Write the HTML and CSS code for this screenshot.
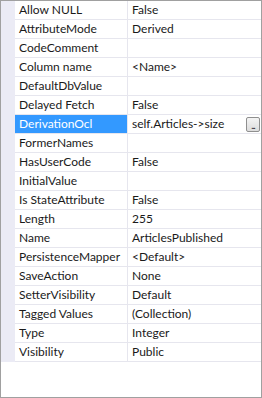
FILE: index.html
```html
<!DOCTYPE html>
<html lang="en">
<head>
    <meta charset="UTF-8">
    <title>Properties</title>
    <link rel="stylesheet" href="styles.css">
</head>
<body>
    <div class="property-grid">
        <div class="prop-row"><div class="gutter"></div><div class="prop-name">Allow NULL</div><div class="prop-value">False</div></div>
        <div class="prop-row"><div class="gutter"></div><div class="prop-name">AttributeMode</div><div class="prop-value">Derived</div></div>
        <div class="prop-row"><div class="gutter"></div><div class="prop-name">CodeComment</div><div class="prop-value"></div></div>
        <div class="prop-row"><div class="gutter"></div><div class="prop-name">Column name</div><div class="prop-value">&lt;Name&gt;</div></div>
        <div class="prop-row"><div class="gutter"></div><div class="prop-name">DefaultDbValue</div><div class="prop-value"></div></div>
        <div class="prop-row"><div class="gutter"></div><div class="prop-name">Delayed Fetch</div><div class="prop-value">False</div></div>
        <div class="prop-row selected"><div class="gutter"></div><div class="prop-name">DerivationOcl</div><div class="prop-value">self.Articles-&gt;size<span class="ellipsis-btn">...</span></div></div>
        <div class="prop-row"><div class="gutter"></div><div class="prop-name">FormerNames</div><div class="prop-value"></div></div>
        <div class="prop-row"><div class="gutter"></div><div class="prop-name">HasUserCode</div><div class="prop-value">False</div></div>
        <div class="prop-row"><div class="gutter"></div><div class="prop-name">InitialValue</div><div class="prop-value"></div></div>
        <div class="prop-row"><div class="gutter"></div><div class="prop-name">Is StateAttribute</div><div class="prop-value">False</div></div>
        <div class="prop-row"><div class="gutter"></div><div class="prop-name">Length</div><div class="prop-value">255</div></div>
        <div class="prop-row"><div class="gutter"></div><div class="prop-name">Name</div><div class="prop-value">ArticlesPublished</div></div>
        <div class="prop-row"><div class="gutter"></div><div class="prop-name">PersistenceMapper</div><div class="prop-value">&lt;Default&gt;</div></div>
        <div class="prop-row"><div class="gutter"></div><div class="prop-name">SaveAction</div><div class="prop-value">None</div></div>
        <div class="prop-row"><div class="gutter"></div><div class="prop-name">SetterVisibility</div><div class="prop-value">Default</div></div>
        <div class="prop-row"><div class="gutter"></div><div class="prop-name">Tagged Values</div><div class="prop-value">(Collection)</div></div>
        <div class="prop-row"><div class="gutter"></div><div class="prop-name">Type</div><div class="prop-value">Integer</div></div>
        <div class="prop-row"><div class="gutter"></div><div class="prop-name">Visibility</div><div class="prop-value">Public</div></div>
    </div>
</body>
</html>
```

FILE: styles.css
```css
/* Property grid panel */
body {
    margin: 0;
    font-family: Lato, "Noto Sans", Arial, sans-serif;
    font-size: 12px;
    color: #1a1a1a;
}
.property-grid {
    box-sizing: border-box;
    width: 262px;
    height: 398px;
    border: 1px solid #a0a0a0;
    background-color: #fff;
}
.prop-row {
    display: grid;
    grid-template-columns: 14px 113px 1fr;
    height: 19px;
}
.gutter {
    background-color: #ebebf5;
}
.prop-name,
.prop-value {
    height: 18px;
    line-height: 18px;
    border-bottom: 1px solid #e6e6ee;
    white-space: nowrap;
    overflow: hidden;
}
.prop-name {
    padding-left: 4px;
    border-right: 1px solid #e6e6ee;
}
.prop-value {
    position: relative;
    padding-left: 4px;
}
.selected .prop-name {
    background-color: #3399ff;
    color: #fff;
}
.ellipsis-btn {
    position: absolute;
    right: 1px;
    top: 2px;
    box-sizing: border-box;
    width: 14px;
    height: 15px;
    border: 1px solid #8f8f8f;
    border-radius: 2px;
    background: linear-gradient(#f4f4f4, #dcdcdc);
    font-size: 9px;
    line-height: 16px;
    text-align: center;
    letter-spacing: -1px;
}
```
